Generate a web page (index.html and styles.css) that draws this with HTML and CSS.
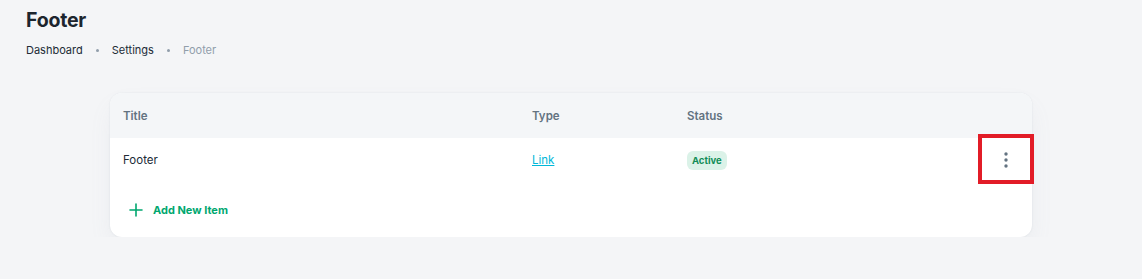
FILE: index.html
```html
<!DOCTYPE html>
<html lang="en">
<head>
    <meta charset="UTF-8">
    <title>Footer</title>
    <link rel="stylesheet" href="styles.css">
</head>
<body>
<div id="page">
    <h1 class="page-title">Footer</h1>
    <ul class="crumbs">
        <li>Dashboard</li>
        <li class="dot"></li>
        <li>Settings</li>
        <li class="dot"></li>
        <li class="current">Footer</li>
    </ul>

    <div class="card">
        <div class="row head">
            <div class="cell">Title</div>
            <div class="cell">Type</div>
            <div class="cell">Status</div>
            <div class="cell"></div>
        </div>
        <div class="row body">
            <div class="cell">Footer</div>
            <div class="cell"><a href="#" class="link">Link</a></div>
            <div class="cell"><span class="badge">Active</span></div>
            <div class="cell action">
                <svg width="16" height="20" viewBox="0 0 16 20">
                    <circle cx="8" cy="4" r="1.7" fill="#637381"/>
                    <circle cx="8" cy="10" r="1.7" fill="#637381"/>
                    <circle cx="8" cy="16" r="1.7" fill="#637381"/>
                </svg>
                <span class="mark"></span>
            </div>
        </div>
        <div class="add">
            <svg width="14" height="14" viewBox="0 0 14 14">
                <path d="M7 1v12M1 7h12" stroke="#00a76f" stroke-width="1.6" stroke-linecap="round"/>
            </svg>
            <span>Add New Item</span>
        </div>
    </div>
</div>
</body>
</html>
```

FILE: styles.css
```css
*{
    margin: 0;
    padding: 0;
    box-sizing: border-box;
}
ul{
    list-style: none;
}
body{
    background: #f4f5f7;
    font-family: "Inter", "Liberation Sans", sans-serif;
    color: #1c252e;
}
#page{
    padding: 8px 0 0 26px;
}
.page-title{
    font-size: 19.5px;
    font-weight: 700;
    line-height: 24px;
    letter-spacing: -0.2px;
}
.crumbs{
    display: flex;
    align-items: center;
    gap: 13px;
    margin-top: 10px;
    font-size: 11px;
    line-height: 16px;
    color: #212b36;
}
.crumbs .dot{
    width: 3px;
    height: 3px;
    border-radius: 50%;
    background: #919eab;
}
.crumbs .current{
    color: #919eab;
}

.card{
    width: 922px;
    margin: 35px 0 0 84px;
    background: #fff;
    border-radius: 12px;
    box-shadow: 0 0 2px rgba(145,158,171,0.2), 0 12px 24px -4px rgba(145,158,171,0.12);
}
.row{
    display: grid;
    grid-template-columns: 409px 155px 1fr 56px;
    align-items: center;
}
.row .cell{
    padding-left: 13px;
}
.head{
    height: 45px;
    background: #f4f6f8;
    border-radius: 12px 12px 0 0;
    font-size: 11.5px;
    font-weight: 600;
    color: #637381;
}
.body{
    height: 44px;
    font-size: 11.5px;
    color: #212b36;
}
.link{
    color: #00b8d9;
    text-decoration: underline;
}
.badge{
    display: inline-block;
    height: 19px;
    line-height: 19px;
    padding: 0 5px;
    border-radius: 6px;
    background: #dbf2e8;
    color: #118d57;
    font-size: 9.5px;
    font-weight: 700;
}
.row .action{
    position: relative;
    height: 44px;
    display: flex;
    align-items: center;
    justify-content: center;
    padding-left: 4px;
}
.action .mark{
    position: absolute;
    left: 2px;
    right: -2px;
    top: -4px;
    bottom: -2px;
    border: 4px solid #e21c27;
}
.add{
    display: flex;
    align-items: center;
    gap: 10px;
    padding: 0 0 0 19px;
    height: 55px;
    font-size: 11px;
    font-weight: 700;
    color: #00a76f;
}
```
